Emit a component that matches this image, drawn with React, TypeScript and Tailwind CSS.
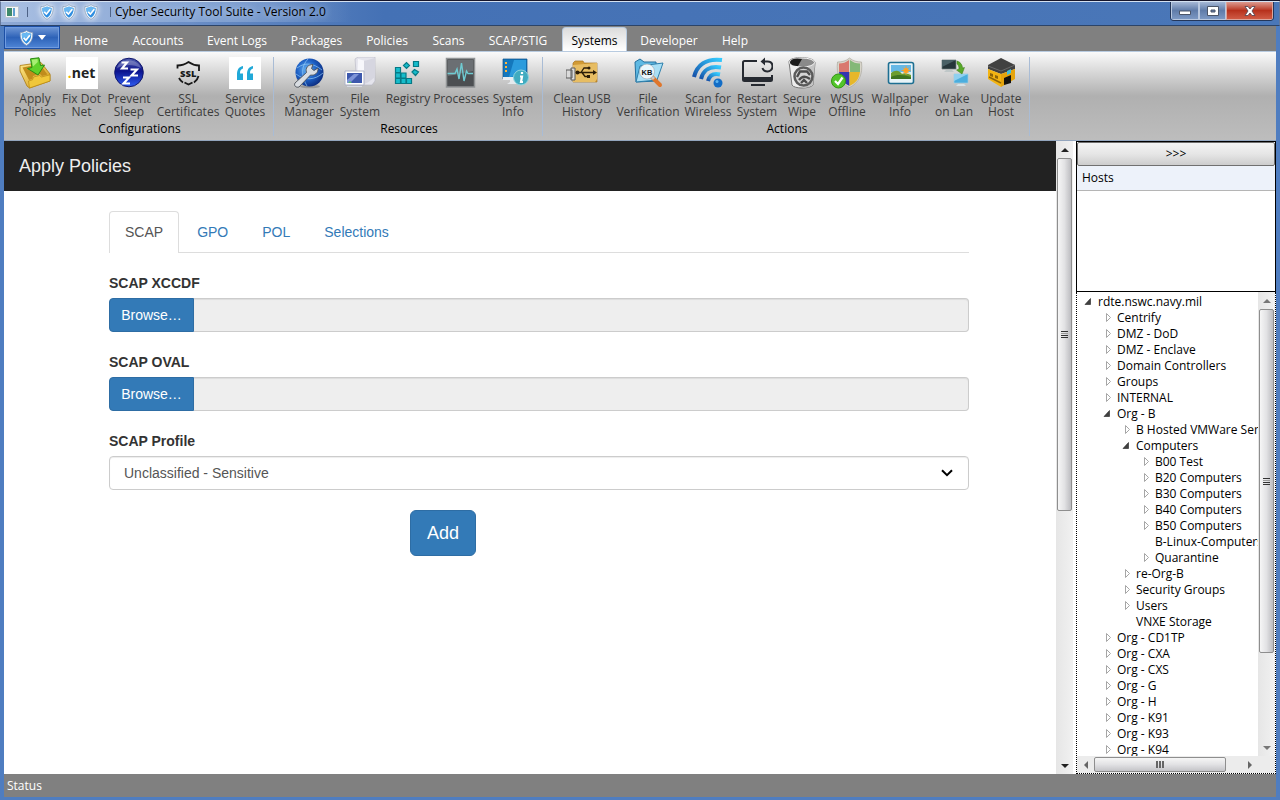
import type { ReactNode } from "react";

const Svg = ({ children }: { children: ReactNode }) => (
  <svg viewBox="0 0 32 32" className="block size-8 shrink-0" aria-hidden="true">
    {children}
  </svg>
);

const Shield = ({ className }: { className: string }) => (
  <svg viewBox="0 0 16 18" className={className} aria-hidden="true">
    <path d="M8 .6C6 2.2 3.6 2.9 1 2.8C.6 9 2.2 14.200 8 17.400C13.800 14.200 15.400 9 15 2.800C12.400 2.900 10 2.200 8 .6Z" fill="#f4f8fc" stroke="#7f97b3" strokeWidth=".8" />
    <path d="M8 2.600C6.300 3.700 4.600 4.200 2.700 4.300C2.600 9 4 13 8 15.500C12 13 13.400 9 13.300 4.300C11.400 4.200 9.700 3.700 8 2.600Z" fill="#2f8ee0" />
    <path d="M8 2.600C6.300 3.700 4.600 4.200 2.700 4.300C2.600 6.500 2.900 8.500 3.700 10.300L13 6V4.300C11.400 4.200 9.700 3.700 8 2.600Z" fill="#69b8f2" />
    <path d="M4.800 8.800L7.300 11.400L11.800 5.800" fill="none" stroke="#fff" strokeWidth="1.900" />
  </svg>
);

const Globe = ({ id }: { id: string }) => (
  <>
    <defs>
      <radialGradient id={id} cx=".4" cy=".4" r=".65">
        <stop offset="0" stopColor="#68b4f4" />
        <stop offset=".55" stopColor="#1d5fc4" />
        <stop offset="1" stopColor="#0b2a7c" />
      </radialGradient>
    </defs>
    <ellipse cx="17" cy="29.500" rx="10" ry="1.800" fill="#0003" />
    <circle cx="16.500" cy="15.500" r="14" fill={`url(#${id})`} />
  </>
);

const icons: Record<string, ReactNode> = {
  apply: (
    <Svg>
      <defs>
        <linearGradient id="tray" x1="0" y1="0" x2="1" y2="1">
          <stop offset="0" stopColor="#ffe98a" />
          <stop offset="1" stopColor="#cf9510" />
        </linearGradient>
      </defs>
      <path d="M1 8.500L22 5.500L31 17V24L10.500 31L8 29L1 14Z" fill="url(#tray)" stroke="#a9790c" strokeWidth=".8" />
      <path d="M3.500 10.500L21 7.300L28.500 17.500L23 19L21 17L14 19L13.500 22L10 23Z" fill="#c08c1c" />
      <path d="M9.500 24L13.500 22.800L14.500 20L20.500 18.500L22.500 20L31 17.800V24L10.500 31Z" fill="#f0c73a" stroke="#b98912" strokeWidth=".7" />
      <path d="M11.500 1.800L20 .8L21.500 8.500L25.500 8L19 18L8.500 11.500L13 10.500Z" fill="#5fd12b" stroke="#2b8a12" />
      <path d="M12.700 2.700L18.500 2L18.800 5L14 9.500Z" fill="#a8ee74" />
    </Svg>
  ),
  dotnet: (
    <span className="flex size-8 items-center justify-center bg-white font-['Open_Sans',sans-serif] text-[14px] leading-4 font-bold text-[#222]">
      <span className="text-[#f2b400]">.</span>net
    </span>
  ),
  sleep: (
    <Svg>
      <defs>
        <linearGradient id="sleepBall" x1="0" y1="0" x2="0" y2="1">
          <stop offset="0" stopColor="#5460ae" />
          <stop offset=".45" stopColor="#0b128c" />
          <stop offset="1" stopColor="#2e5cf2" />
        </linearGradient>
      </defs>
      <circle cx="16" cy="15.500" r="14.300" fill="url(#sleepBall)" stroke="#0e156d" />
      <path d="M4 11C7 1 25 1 28 11C20 7 12 7 4 11Z" fill="#fff" opacity=".25" />
      <g fill="none" stroke="#fff" strokeWidth="2.100">
        <path d="M8.500 5.500H14L9 11.500H15" />
        <path d="M17.500 12.500H24L18.500 18.500H25" />
        <path d="M10 20.500H16L10.500 26.500H17" />
      </g>
    </Svg>
  ),
  ssl: (
    <Svg>
      <g fill="none" stroke="#181818" strokeWidth="1.800">
        <path d="M5.500 11.500V8.500C10 8.500 13 7.500 16.500 5C20 7.500 23 8.500 27 8.500V14" />
        <path d="M7 21C8 23 9.500 24.500 11 25.500M26.500 19C26 21.500 24.500 23.500 22 25.500" />
        <path d="M12.500 25.500L16.500 27.500L20.500 25.500" />
      </g>
      <text x="16.200" y="20.200" textAnchor="middle" fontFamily="Open Sans, sans-serif" fontWeight="800" fontSize="9.500" fill="#181818">SSL</text>
    </Svg>
  ),
  quotes: (
    <Svg>
      <path d="M0 0H32V32H0Z" fill="#fff" />
      <path d="M14 9C9 10 8 13.500 8 18V23H14V16.500H11C11 13.500 11.700 12.200 14 11.500ZM24 9C19 10 18 13.500 18 18V23H24V16.500H21C21 13.500 21.700 12.200 24 11.500Z" fill="#21a9d8" />
    </Svg>
  ),
  manager: (
    <Svg>
      <Globe id="globeManager" />
      <path d="M4 11C12 5 20 6 29 13M3 17C12 24 22 23 30 16M15 2C8 9 8 19 14 29" fill="none" stroke="#93cbf7" strokeWidth=".7" />
      <path d="M2 26L13.500 15.500C12 11 15 7.500 20 7.500L18.500 11.500L21 13.500L25 11C25.500 16 21.500 19 17.500 18L6 30C3 31 .5 28.500 2 26Z" fill="#d9dde2" stroke="#4a4f57" strokeWidth=".9" />
    </Svg>
  ),
  files: (
    <Svg>
      <path d="M11 2L14 0H31V24L28 28H13Z" fill="#e4e4ec" stroke="#b5b5c2" strokeWidth=".6" />
      <path d="M14 2L20 3.500V27L13 28Z" fill="#f7f7fb" />
      <path d="M20 4L31 1V20C27 23 24 26 20 27Z" fill="#d6d6e0" />
      <path d="M1 14H20V28H1Z" fill="#fff" stroke="#aeb2c6" />
      <path d="M3 16H18V26H3Z" fill="#3d58ad" />
      <path d="M3 23L10 17H15L6 26H3Z" fill="#7e94d8" />
      <path d="M4 26L6 24L8 26Z" fill="#56bd73" />
      <path d="M3 29H18V30H3Z" fill="#d6d9e3" />
    </Svg>
  ),
  registry: (
    <Svg>
      <g fill="#17bccb" stroke="#067a86" strokeWidth="1.200">
        <path d="M3.500 10.500H8.500V15.500H3.500ZM3.500 16H8.500V21H3.500ZM3.500 21.500H8.500V26.500H3.500ZM9 16H14V21H9ZM9 21.500H14V26.500H9ZM14.500 21.500H19.500V26.500H14.500Z" />
        <path d="M21.500 4.500H26.500V9.500H21.500ZM11.500 8.500L14.500 5.500L17.500 8.500L14.500 11.500ZM20 15L22.500 12.500L26.500 15L23.500 18.500Z" />
      </g>
    </Svg>
  ),
  processes: (
    <Svg>
      <path d="M1.500 1.500H29.500V30H1.500Z" fill="#4c4f52" stroke="#909395" strokeWidth="1.500" />
      <path d="M3 3H28V14L3 19Z" fill="#6b6f73" />
      <path d="M2.500 16.500H10L12 12L14 22L16.500 6L19 24L21.500 14L23 16.500H28" fill="none" stroke="#6fcbd2" strokeWidth="1.400" />
    </Svg>
  ),
  info: (
    <Svg>
      <path d="M6 2H30V22H6Z" fill="#1477bc" stroke="#0d528a" strokeWidth=".7" />
      <path d="M17 3H29V18L12 20Z" fill="#2b9bdd" />
      <path d="M6 20H29V23H6Z" fill="#e9eef3" />
      <path d="M8 5H10V7H8ZM8 9H10V11H8ZM8 13H10V15H8Z" fill="#ffb43d" />
      <path d="M13 23H21V25L25 27H10L13 25Z" fill="#e5e9ed" />
      <circle cx="24" cy="20.500" r="7.500" fill="#40abc0" stroke="#8dd3de" />
      <path d="M25 15V17M23 19.500H25L24 25H26" fill="none" stroke="#fff" strokeWidth="2.200" />
    </Svg>
  ),
  usb: (
    <Svg>
      <path d="M7 6L9 4H17L18 6H31V25H7Z" fill="#d19a35" stroke="#a87622" strokeWidth=".7" />
      <path d="M7 8L31 6V22L29 25H7Z" fill="#e7bd63" />
      <path d="M0 13H6V21H0ZM5 11H9V23H5Z" fill="#dadada" stroke="#5a5a5a" />
      <path d="M11 15.500H28M15 15.500L18 11H22M16 15.500L19 19.500H23" fill="none" stroke="#2b1d08" strokeWidth="1.300" />
      <path d="M27 13L31 15.500L27 18ZM21 18H24V21H21Z" fill="#2b1d08" />
      <circle cx="11.500" cy="15.500" r="2" fill="#2b1d08" />
      <circle cx="23" cy="11" r="1.500" fill="#2b1d08" />
    </Svg>
  ),
  verify: (
    <Svg>
      <path d="M3 5L8 2L12 5H24L25 24L4 25Z" fill="#5eb9e3" stroke="#246f9d" />
      <path d="M4 25L8 9L31 6L25 23Z" fill="#a9dff5" stroke="#2e80ac" />
      <path d="M20 20L28 28" stroke="#df762c" strokeWidth="4" strokeLinecap="round" />
      <path d="M19 19L22 22" stroke="#c7c7c7" strokeWidth="3" />
      <circle cx="15" cy="14.500" r="6.700" fill="#e8f7fd" stroke="#f5f5f5" strokeWidth="1.600" />
      <circle cx="15" cy="14.500" r="7.500" fill="none" stroke="#8ba3b3" strokeWidth=".6" />
      <text x="15" y="17.500" textAnchor="middle" fontFamily="Liberation Sans, sans-serif" fontWeight="700" fontSize="7.500" fill="#111">KB</text>
    </Svg>
  ),
  wireless: (
    <Svg>
      <defs>
        <linearGradient id="waves" x1="1" y1="0" x2="0" y2="1">
          <stop offset="0" stopColor="#35cbff" />
          <stop offset="1" stopColor="#1550a8" />
        </linearGradient>
      </defs>
      <g fill="none" stroke="url(#waves)" strokeWidth="4">
        <path d="M2 20C5 8 14 1 30 3" />
        <path d="M9 22C11 13 18 8.500 29 10.500" />
        <path d="M16 24C17.500 18.500 21 16 28 17.500" />
      </g>
      <circle cx="26" cy="26" r="4.500" fill="#136dc6" />
      <circle cx="25" cy="24.500" r="1.500" fill="#5fb5ef" />
    </Svg>
  ),
  restart: (
    <Svg>
      <path d="M16 4H3.500Q2 4 2 5.500V22.500Q2 24 3.500 24H29.500Q31 24 31 22.500V18" fill="none" stroke="#262a31" strokeWidth="2" />
      <path d="M22 4.500H26.500C30 4.500 31.500 7 31.500 9.500C31.500 12.500 29 14.500 26.500 14.500C24 14.500 22 13 21.500 11" fill="none" stroke="#262a31" strokeWidth="2" />
      <path d="M2 20H31V24H2ZM10 27H24V29H10ZM24 .5V8.500L19.500 4.500Z" fill="#262a31" />
    </Svg>
  ),
  wipe: (
    <Svg>
      <path d="M3 5C3 -1 29 -1 29 6L27 28C24 32 8 32 6 28Z" fill="#eeeeee" stroke="#777" />
      <path d="M22 8L29 6L27 28C24 30 20 31 17 31Z" fill="#c4c4c4" />
      <ellipse cx="16" cy="5.500" rx="12.500" ry="4.500" fill="#8a8a8a" stroke="#f5f5f5" />
      <path d="M4 5C5 1 12 1 16 2L12 9C8 9 4 8 4 5Z" fill="#1b1b1b" />
      <circle cx="17.500" cy="19.500" r="9" fill="#d5d5d5" stroke="#5b5b5b" strokeWidth="2.500" />
      <path d="M11 20L14 14.500H21L24 18M13 23C16 19 20 19 24 22M15 26L18 23L21 26" fill="none" stroke="#4c4c4c" strokeWidth="2.400" />
    </Svg>
  ),
  wsus: (
    <Svg>
      <path d="M18.500 1C15 4 11 5 6.500 5C5 17 9 26 18.500 30.500C28 26 32 17 30.500 5C26 5 22 4 18.500 1Z" fill="#d9d6cb" stroke="#a3a096" strokeWidth=".6" />
      <path d="M18 3C15 5.500 12 6.500 8 6.500V15H18Z" fill="#d9786e" />
      <path d="M19 3C22 5.500 25 6.500 29 6.500V15H19Z" fill="#84b878" />
      <path d="M8 15H18.500V29C12 26 9 22 8 15Z" fill="#3334b1" />
      <path d="M29 15H18.500V29C25 26 28 22 29 15Z" fill="#e6b72a" />
      <circle cx="7.500" cy="24" r="7" fill="#52c42b" stroke="#339512" />
      <path d="M4 24L7 27L11.500 20.500" fill="none" stroke="#fff" strokeWidth="2.200" />
    </Svg>
  ),
  wallpaper: (
    <Svg>
      <rect x="4.500" y="5.500" width="25" height="21" rx="2" fill="#e8f4f8" stroke="#1e6f92" strokeWidth="1.600" />
      <path d="M7 8H27V22H7Z" fill="#66b8e6" />
      <path d="M7 15H27V22H7Z" fill="#d7ecef" />
      <path d="M7 16C12 12 16 14 18 17C21 15 25 17 27 18V22H7Z" fill="#6d9d2e" />
      <path d="M7 20C13 17 21 18 27 20V22H7Z" fill="#3f7421" />
      <circle cx="22" cy="13.500" r="2.600" fill="#ffab2c" />
      <path d="M22 9V18M17.500 13.500H26.500M19 10.500L25 16.500M25 10.500L19 16.500" stroke="#ff9a20" strokeWidth=".8" />
    </Svg>
  ),
  wake: (
    <Svg>
      <path d="M4 3H18V12H4Z" fill="#26363a" stroke="#6e7b7c" strokeWidth=".7" />
      <path d="M4 3H18L4 10Z" fill="#496065" />
      <path d="M8 13H14L16 15H6Z" fill="#bfc7c8" />
      <path d="M16 17H30V26H16Z" fill="#4baede" stroke="#9fcde3" strokeWidth=".7" />
      <path d="M16 17H30L16 24Z" fill="#8fd0ef" />
      <path d="M20 27H26L28 29H18Z" fill="#d8e1e5" />
      <path d="M19 4C22.500 5 24.500 8 24.500 11L26.500 10.500L24 17L18.500 13L21 12C21 9.500 20.500 8 19 7Z" fill="#58a829" stroke="#387b15" strokeWidth=".5" />
    </Svg>
  ),
  host: (
    <Svg>
      <path d="M3 8L16 1L30 8V12L16 17L3 12Z" fill="#414141" />
      <path d="M3 12L16 17V30L3 22Z" fill="#f3b412" />
      <path d="M16 17L30 12V22L16 30Z" fill="#e5a40c" />
      <path d="M5 16L8 17V20L5 19ZM10 18L13 19V22L10 21Z" fill="#8d6509" />
      <path d="M22 14L26 12V16L22 18Z" fill="#43bddb" />
      <path d="M19 21L26 18V26L19 28Z" fill="#15130e" />
      <path d="M3 9L16 14L30 8" fill="none" stroke="#686868" />
      <path d="M4 20L16 26" stroke="#8d6509" strokeWidth="1.500" />
    </Svg>
  ),
};

type Tool = { icon: string; label: string; width: string };
const groups: { name: string; tools: Tool[] }[] = [
  {
    name: "Configurations",
    tools: [
      { icon: "apply", label: "Apply\nPolicies", width: "w-[46px]" },
      { icon: "dotnet", label: "Fix Dot\nNet", width: "w-[47px]" },
      { icon: "sleep", label: "Prevent\nSleep", width: "w-[48px]" },
      { icon: "ssl", label: "SSL\nCertificates", width: "w-[70px]" },
      { icon: "quotes", label: "Service\nQuotes", width: "w-[44px]" },
    ],
  },
  {
    name: "Resources",
    tools: [
      { icon: "manager", label: "System\nManager", width: "w-[54px]" },
      { icon: "files", label: "File\nSystem", width: "w-[48px]" },
      { icon: "registry", label: "Registry", width: "w-[48px]" },
      { icon: "processes", label: "Processes", width: "w-[58px]" },
      { icon: "info", label: "System\nInfo", width: "w-[46px]" },
    ],
  },
  {
    name: "Actions",
    tools: [
      { icon: "usb", label: "Clean USB\nHistory", width: "w-[62px]" },
      { icon: "verify", label: "File\nVerification", width: "w-[70px]" },
      { icon: "wireless", label: "Scan for\nWireless", width: "w-[50px]" },
      { icon: "restart", label: "Restart\nSystem", width: "w-[48px]" },
      { icon: "wipe", label: "Secure\nWipe", width: "w-[42px]" },
      { icon: "wsus", label: "WSUS\nOffline", width: "w-[48px]" },
      { icon: "wallpaper", label: "Wallpaper\nInfo", width: "w-[58px]" },
      { icon: "wake", label: "Wake\non Lan", width: "w-[50px]" },
      { icon: "host", label: "Update\nHost", width: "w-[44px]" },
    ],
  },
];

const menu = [
  { label: "Home", width: "w-[54px]" },
  { label: "Accounts", width: "w-[68px]" },
  { label: "Event Logs", width: "w-[78px]" },
  { label: "Packages", width: "w-[69px]" },
  { label: "Policies", width: "w-[60px]" },
  { label: "Scans", width: "w-[51px]" },
  { label: "SCAP/STIG", width: "w-[76px]" },
  { label: "Systems", width: "w-[65px]" },
  { label: "Developer", width: "w-[72px]" },
  { label: "Help", width: "w-[48px]" },
];

type Node = { name: string; leaf?: boolean; children?: Node[] };
const tree: Node[] = [
  {
    name: "rdte.nswc.navy.mil",
    children: [
      { name: "Centrify" },
      { name: "DMZ - DoD" },
      { name: "DMZ - Enclave" },
      { name: "Domain Controllers" },
      { name: "Groups" },
      { name: "INTERNAL" },
      {
        name: "Org - B",
        children: [
          { name: "B Hosted VMWare Servers" },
          {
            name: "Computers",
            children: [
              { name: "B00 Test" },
              { name: "B20 Computers" },
              { name: "B30 Computers" },
              { name: "B40 Computers" },
              { name: "B50 Computers" },
              { name: "B-Linux-Computers", leaf: true },
              { name: "Quarantine" },
            ],
          },
          { name: "re-Org-B" },
          { name: "Security Groups" },
          { name: "Users" },
          { name: "VNXE Storage", leaf: true },
        ],
      },
      { name: "Org - CD1TP" },
      { name: "Org - CXA" },
      { name: "Org - CXS" },
      { name: "Org - G" },
      { name: "Org - H" },
      { name: "Org - K91" },
      { name: "Org - K93" },
      { name: "Org - K94" },
    ],
  },
];

function Branch({ nodes, nested }: { nodes: Node[]; nested?: boolean }) {
  return (
    <ul className={nested ? "pl-[19px]" : ""}>
      {nodes.map((node) => (
        <li key={node.name}>
          <button type="button" className="flex h-4 items-center whitespace-nowrap">
            <svg viewBox="0 0 14 16" className="h-4 w-[14px] shrink-0" aria-hidden="true">
              {node.children ? (
                <path d="M6.500 4.500V10.500H1Z" fill="#404040" stroke="#222" strokeWidth=".6" />
              ) : node.leaf ? null : (
                <path d="M3.500 3.500V11.500L7.500 7.500Z" fill="#fff" stroke="#a6a6a6" />
              )}
            </svg>
            {node.name}
          </button>
          {node.children && <Branch nodes={node.children} nested />}
        </li>
      ))}
    </ul>
  );
}

const arrows = { up: "M0 6L4 2L8 6Z", down: "M0 2L4 6L8 2Z", left: "M6 0L2 4L6 8Z", right: "M2 0L6 4L2 8Z" };
const Arrow = ({ dir, fill }: { dir: keyof typeof arrows; fill: string }) => (
  <button type="button" aria-label={`Scroll ${dir}`} className="flex size-[17px] shrink-0 items-center justify-center">
    <svg viewBox="0 0 8 8" className="size-2">
      <path d={arrows[dir]} fill={fill} />
    </svg>
  </button>
);

function VScroll({ thumb, arrow }: { thumb: string; arrow: string }) {
  return (
    <div className="flex w-[17px] shrink-0 flex-col bg-linear-to-r from-[#e6e6e6] to-[#f1f1f1]">
      <Arrow dir="up" fill={arrow} />
      <div className="min-h-0 flex-1 px-px">
        <div className={`flex flex-col items-center justify-center gap-px rounded-xs border border-[#8e8e8e] bg-linear-to-r from-[#f6f6f6] via-[#e2e2e4] to-[#bcbcc0] ${thumb}`}>
          <span className="h-px w-[7px] bg-[#333]" />
          <span className="h-px w-[7px] bg-[#999]" />
          <span className="h-px w-[7px] bg-[#333]" />
          <span className="h-px w-[7px] bg-[#333]" />
        </div>
      </div>
      <Arrow dir="down" fill={arrow} />
    </div>
  );
}

function FileField({ id, label }: { id: string; label: string }) {
  return (
    <div className="mb-5">
      <label htmlFor={id} className="mb-[5px] block font-bold">{label}</label>
      <div className="flex h-[34px]">
        <button type="button" className="w-[85px] shrink-0 rounded-l-sm border border-[#2e6da4] bg-[#337ab7] text-white">Browse…</button>
        <input id={id} type="text" readOnly className="min-w-0 flex-1 rounded-r-sm border border-l-0 border-[#ccc] bg-[#eee] px-3 shadow-[inset_0_1px_1px_rgba(0,0,0,0.075)]" />
      </div>
    </div>
  );
}

export default function App() {
  return (
    <div className="flex h-screen flex-col overflow-hidden border-t border-[#15152b] bg-[#4672b5] font-['Open_Sans','Noto_Sans',sans-serif] text-[12px] leading-4 text-black">
      <header className="flex h-[25px] shrink-0 items-start border-x border-t border-b border-x-[#66799b] border-t-[#d4e1f1] border-b-[#2c4468] bg-linear-to-r from-[#8fa9d4] via-[#4471b5] via-30% to-[#4a77b8]">
        <div className="flex h-5 min-w-0 flex-1 items-center bg-linear-to-r from-[#a9bfe2] via-[#7f9fd0] via-20% to-transparent to-30%">
          <svg viewBox="0 0 14 12" className="ml-1 h-3 w-[14px]" aria-hidden="true">
            <path d="M.5 .5H13.500V11.500H.5Z" fill="#f5f5f5" stroke="#b9c4d0" />
            <path d="M2 2H7V10H2Z" fill="#3f8a6b" />
            <path d="M8 2H10V10H8Z" fill="#5f9fd0" />
          </svg>
          <span className="ml-2 h-[10px] w-px bg-[#4d6286]" />
          <div className="ml-3 flex gap-2">
            <Shield className="h-4 w-[14px] drop-shadow-[0_0_3px_white]" />
            <Shield className="h-4 w-[14px] drop-shadow-[0_0_3px_white]" />
            <Shield className="h-4 w-[14px] drop-shadow-[0_0_3px_white]" />
          </div>
          <span className="ml-3 h-[10px] w-px bg-[#4d6286]" />
          <h1 className="ml-1 whitespace-nowrap [text-shadow:0_0_6px_#c9daf2]">Cyber Security Tool Suite - Version 2.0</h1>
        </div>
        <div className="mr-[5px] flex h-[19px] overflow-hidden rounded-b-[4px] border border-t-0 border-[#24375a]">
          <button type="button" aria-label="Minimize" className="flex w-[28px] items-center justify-center border border-t-0 border-[#b9c8df] bg-linear-to-b from-[#a6b8d6] via-[#607ca9] to-[#7c98c3]">
            <svg viewBox="0 0 12 10" className="h-[10px] w-3"><path d="M.5 5H11.500V8.500H.5Z" fill="#fff" stroke="#4b5568" /></svg>
          </button>
          <button type="button" aria-label="Maximize" className="flex w-[27px] items-center justify-center border border-t-0 border-[#b9c8df] bg-linear-to-b from-[#a6b8d6] via-[#607ca9] to-[#7c98c3]">
            <svg viewBox="0 0 12 10" className="h-[10px] w-3"><path d="M.5 .5H11.500V9.500H.5ZM4 4V6H8V4Z" fill="#fff" stroke="#4b5568" fillRule="evenodd" /></svg>
          </button>
          <button type="button" aria-label="Close" className="flex w-[47px] items-center justify-center border border-t-0 border-[#dca69c] bg-linear-to-b from-[#dc9a90] via-[#b7311c] to-[#cf5a43]">
            <svg viewBox="0 0 12 10" className="h-[10px] w-3"><path d="M1 .5H4L6 3L8 .5H11L8 5L11 9.500H8L6 7L4 9.500H1L4 5Z" fill="#fff" stroke="#5b4a55" strokeWidth=".9" /></svg>
          </button>
        </div>
      </header>

      <div className="flex min-h-0 flex-1 flex-col border-x-4 border-b-[3px] border-[#4f7dc0]">
        <nav className="flex h-[25px] shrink-0 items-end gap-[6px] bg-[#808080] text-white">
          <button type="button" aria-label="Application menu" className="-mr-[2px] flex h-[23px] w-14 shrink-0 items-center justify-center gap-1 self-start border border-[#1c4fa5] bg-linear-to-b from-[#7098d6] via-[#2d62b8] to-[#4f86d6] shadow-[inset_0_0_0_1px_#6f9be0]">
            <Shield className="h-4 w-[15px]" />
            <svg viewBox="0 0 8 5" className="h-[5px] w-2"><path d="M0 0H8L4 5Z" fill="#fff" /></svg>
          </button>
          {menu.map((item) => (
            <button
              key={item.label}
              type="button"
              className={`h-6 shrink-0 whitespace-nowrap ${item.width} ${item.label === "Systems" ? "rounded-t-[4px] border border-b-0 border-[#b8cbe0] bg-linear-to-b from-[#dcdcdc] to-white pt-[3px] text-black" : "pt-1"}`}
            >
              {item.label}
            </button>
          ))}
        </nav>

        <section className="flex h-[90px] shrink-0 border-t border-b border-t-[#b8cbe0] border-b-[#93a5bd] bg-linear-to-b from-[#fafafa] via-[#b0b0b0] to-[#bdbdbd] pt-[5px] pb-1">
          {groups.map((group) => (
            <div key={group.name} className="flex shrink-0 flex-col border-r border-[#a9bcd5] pr-[6px] pl-2">
              <div className="flex h-[65px] shrink-0">
                {group.tools.map((tool) => (
                  <button key={tool.icon} type="button" className={`flex shrink-0 flex-col items-center gap-[3px] ${tool.width}`}>
                    {icons[tool.icon]}
                    <span className="text-center leading-[13px] whitespace-pre text-[#3c3c3c]">{tool.label}</span>
                  </button>
                ))}
              </div>
              <h2 className="text-center leading-[14px]">{group.name}</h2>
            </div>
          ))}
        </section>

        <div className="flex min-h-0 flex-1 bg-white">
          <main className="min-w-0 flex-1 overflow-hidden font-['Liberation_Sans',sans-serif] text-[14px] leading-5 text-[#333]">
            <h2 className="flex h-[50px] items-center bg-[#222] px-[15px] text-[18px] text-[#eee]">Apply Policies</h2>
            <div className="pt-5 pr-[87px] pl-[105px]">
              <div className="mb-5 flex h-[42px] gap-[2px] border-b border-[#ddd] text-[#337ab7]">
                <button type="button" className="-mb-px rounded-t-sm border border-b-0 border-[#ddd] bg-white px-[15px] pb-[2px] text-[#555]">SCAP</button>
                <button type="button" className="px-4">GPO</button>
                <button type="button" className="px-4">POL</button>
                <button type="button" className="px-4">Selections</button>
              </div>
              <FileField id="xccdf" label="SCAP XCCDF" />
              <FileField id="oval" label="SCAP OVAL" />
              <label htmlFor="profile" className="mb-[5px] block font-bold">SCAP Profile</label>
              <div className="relative mb-5">
                <select id="profile" className="h-[34px] w-full appearance-none rounded-sm border border-[#ccc] bg-white px-[14px] text-[#555] shadow-[inset_0_1px_1px_rgba(0,0,0,0.075)]">
                  <option>Unclassified - Sensitive</option>
                </select>
                <svg viewBox="0 0 12 8" className="pointer-events-none absolute top-[13px] right-4 h-2 w-3" aria-hidden="true">
                  <path d="M1 1.200L6 6.200L11 1.200" fill="none" stroke="#000" strokeWidth="2" />
                </svg>
              </div>
              <button type="button" className="ml-[35%] h-[46px] rounded-md border border-[#2e6da4] bg-[#337ab7] px-4 text-[18px] text-white">Add</button>
            </div>
          </main>
          <VScroll thumb="h-[59%]" arrow="#222" />

          <aside className="ml-[3px] flex w-[200px] shrink-0 flex-col">
            <div className="flex h-[151px] shrink-0 flex-col border border-black">
              <button type="button" className="h-6 rounded-xs border border-[#707070] bg-linear-to-b from-[#f3f3f3] via-[#e6e6e6] to-[#cdcdcd]">&gt;&gt;&gt;</button>
              <h2 className="flex h-[25px] items-center border-b border-[#b5b5b5] bg-[#edf2fa] px-[5px]">Hosts</h2>
            </div>
            <div className="flex min-h-0 flex-1 flex-col border border-t-0 border-dotted border-black">
              <div className="flex min-h-0 flex-1">
                <div className="min-w-0 flex-1 overflow-hidden pt-[2px] pl-[7px]">
                  <Branch nodes={tree} />
                </div>
                <VScroll thumb="h-[80%]" arrow="#777" />
              </div>
              <div className="flex h-[17px] shrink-0 bg-[#ececec] pr-[17px]">
                <Arrow dir="left" fill="#666" />
                <div className="min-w-0 flex-1 py-px">
                  <div className="flex h-full w-[90%] items-center justify-center gap-px rounded-xs border border-[#8e8e8e] bg-linear-to-b from-[#f6f6f6] via-[#e2e2e4] to-[#c4c4c8]">
                    <span className="h-[7px] w-[2px] bg-[#666]" />
                    <span className="h-[7px] w-[2px] bg-[#666]" />
                    <span className="h-[7px] w-[2px] bg-[#666]" />
                  </div>
                </div>
                <Arrow dir="right" fill="#666" />
              </div>
            </div>
          </aside>
        </div>
        <footer className="flex h-[23px] shrink-0 items-center bg-[#808080] px-[3px] text-white">Status</footer>
      </div>
    </div>
  );
}
